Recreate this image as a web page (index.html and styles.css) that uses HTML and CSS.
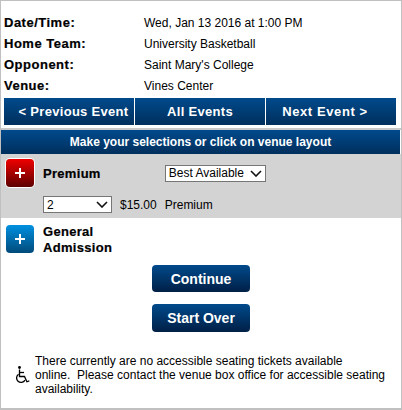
FILE: index.html
```html
<!DOCTYPE html>
<html lang="en">
<head>
<meta charset="utf-8">
<title>Event selection</title>
<link rel="stylesheet" href="styles.css">
</head>
<body>
<div class="frame">
  <dl class="info">
    <div class="info-row"><dt>Date/Time:</dt><dd>Wed, Jan 13 2016 at 1:00 PM</dd></div>
    <div class="info-row"><dt>Home Team:</dt><dd>University Basketball</dd></div>
    <div class="info-row"><dt>Opponent:</dt><dd>Saint Mary's College</dd></div>
    <div class="info-row"><dt>Venue:</dt><dd>Vines Center</dd></div>
  </dl>
  <nav class="event-nav">
    <a class="nav-link nav-prev">&lt; Previous Event</a>
    <a class="nav-link">All Events</a>
    <a class="nav-link nav-next">Next Event &gt;</a>
  </nav>
  <div class="rule"></div>
  <div class="prompt">Make your selections or click on venue layout</div>
  <section class="tier">
    <div class="tier-head">
      <span class="toggle toggle-red">
        <svg class="plus" viewBox="0 0 10 10"><path d="M4 0h2v4h4v2H6v4H4V6H0V4h4z"/></svg>
      </span>
      <span class="tier-name">Premium</span>
      <span class="select-wrap select-best">
        <select class="select"><option>Best Available</option></select>
        <svg class="chevron" viewBox="0 0 12 7"><path d="M1 1l5 5 5-5"/></svg>
      </span>
    </div>
    <div class="tier-line">
      <span class="select-wrap select-qty">
        <select class="select"><option>2</option></select>
        <svg class="chevron" viewBox="0 0 12 7"><path d="M1 1l5 5 5-5"/></svg>
      </span>
      <span class="price">$15.00</span>
      <span>Premium</span>
    </div>
  </section>
  <section class="tier-closed">
    <span class="toggle toggle-blue">
      <svg class="plus" viewBox="0 0 10 10"><path d="M4 0h2v4h4v2H6v4H4V6H0V4h4z"/></svg>
    </span>
    <span class="tier-name">General<br>Admission</span>
  </section>
  <div class="actions">
    <button class="action" type="button">Continue</button>
    <button class="action" type="button">Start Over</button>
  </div>
  <div class="access">
    <svg class="wheel" viewBox="0 0 14 18"><g fill="none" stroke="#000" stroke-width="1.3"><path d="M3.5 3.5v7h5l2.4 5.3 2.4-.9"/><path d="M3.5 6.5h4.5"/><path d="M2.6 8.2a4.5 4.5 0 1 0 6.4 6"/></g><circle cx="3.5" cy="1.5" r="1.4"/></svg>
    <p>There currently are no accessible seating tickets available<br>online.&nbsp; Please contact the venue box office for accessible seating availability.</p>
  </div>
</div>
</body>
</html>
```
FILE: styles.css
```css
* { box-sizing: border-box; }
html, body { margin: 0; padding: 0; background: #fff; }
body { font-family: "Liberation Sans", Arial, sans-serif; font-size: 12px; color: #000; }
.frame { width: 402px; height: 410px; border: 1px solid #c0c0c0; border-width: 1px 1px 2px 1px; overflow: hidden; }
.info { margin: 0; padding: 11px 3px 0; height: 97px; }
.info-row { display: flex; height: 21px; align-items: center; }
.info dt { width: 140px; font-weight: bold; font-size: 13px; letter-spacing: .5px; -webkit-text-stroke: .2px #000; }
.info dd { margin: 0; }
.event-nav { display: flex; margin: 0 3px; gap: 1px; width: 392px; height: 27px; }
.nav-link { width: 130px; flex: none; display: flex; align-items: center; justify-content: center; color: #fff; font-weight: bold; font-size: 13px; letter-spacing: .3px; background: linear-gradient(#004a8c, #002f5c); }
.nav-prev { padding-left: 9px; }
.nav-next { padding-right: 12px; letter-spacing: .6px; }
.rule { height: 5px; border-bottom: 2px solid #c8c8c8; }
.prompt { height: 24px; margin-right: 1px; display: flex; align-items: center; justify-content: center; color: #fff; font-weight: bold; font-size: 12px; background: linear-gradient(#004a8c, #002f5c); }
.tier { background: #d3d3d3; height: 64px; padding: 4px 0 0 5px; }
.tier-head { display: flex; align-items: center; height: 30px; }
.toggle { width: 28px; height: 28px; border-radius: 4px; display: flex; align-items: center; justify-content: center; flex: none; }
.toggle-red { background: linear-gradient(#f00000, #5c0000); box-shadow: 0 0 0 1px #fff; }
.toggle-blue { background: linear-gradient(#0090e0, #004a7a); margin-top: 2px; }
.plus { width: 10px; height: 10px; fill: #fff; }
.tier-name { font-weight: bold; font-size: 13px; letter-spacing: .3px; margin-left: 9px; line-height: 16px; -webkit-text-stroke: .2px #000; }
.tier-head .tier-name { margin-top: 2px; }
.tier-closed .tier-name { margin-top: 1px; }
.tier-line { display: flex; align-items: center; margin: 8px 0 0 37px; }
.select-wrap { position: relative; display: block; height: 17px; }
.select { display: block; width: 100%; height: 100%; appearance: none; font-family: "Liberation Sans", Arial, sans-serif; font-size: 12px; background: #fff; border: 1px solid #767676; border-radius: 0; padding: 0 0 0 3px; color: #000; }
.chevron { position: absolute; right: 4px; top: 5px; width: 12px; height: 7px; fill: none; stroke: #111; stroke-width: 1.6; pointer-events: none; }
.select-best { width: 101px; margin-left: 64px; }
.select-qty { width: 69px; }
.price { margin: 0 8px; }
.tier-closed { display: flex; padding: 5px 0 0 5px; height: 44px; }
.actions { display: flex; flex-direction: column; align-items: center; gap: 12px; margin-top: 3px; }
.action { width: 98px; height: 27px; border: 0; border-radius: 4px; color: #fff; font-family: "Liberation Sans", Arial, sans-serif; font-weight: bold; font-size: 14px; background: linear-gradient(#004a8c, #001f45); }
.action:last-child { height: 28px; }
.access { display: flex; align-items: center; padding: 22px 10px 0 15px; }
.access p { margin: 0; width: 352px; line-height: 14px; font-size: 12px; }
.wheel { width: 14px; height: 18px; flex: none; margin-right: 5px; }
```
